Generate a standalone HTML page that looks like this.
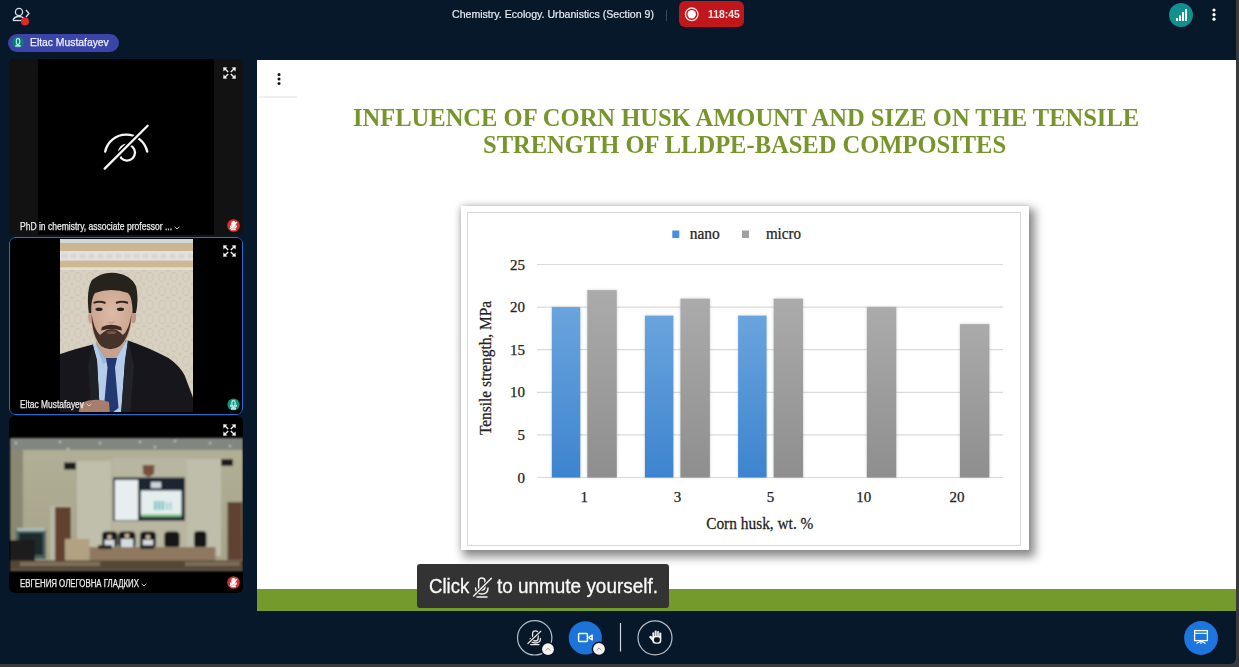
<!DOCTYPE html>
<html><head><meta charset="utf-8">
<style>
*{margin:0;padding:0;box-sizing:border-box}
html,body{width:1239px;height:667px;overflow:hidden;background:#3a3a3a}
body{position:relative;font-family:"Liberation Sans",sans-serif}
.abs{position:absolute}
#app{position:absolute;left:0;top:0;width:1236px;height:664px;background:#06182a;border-radius:0 0 6px 0}
.txt{position:absolute;white-space:nowrap;transform-origin:0 0}
.tile{position:absolute;left:9px;width:234px;background:#000;border-radius:6px;overflow:hidden}
.lbl{position:absolute;left:11px;color:#ededed;-webkit-text-stroke:0.25px #ededed;font-size:9px;white-space:nowrap;transform-origin:0 100%}
.exp{position:absolute;left:214px;top:8px;width:13px;height:13px}
#slide{position:absolute;left:257px;top:60px;width:979px;height:551px;background:#fff;overflow:hidden}
.serif{font-family:"Liberation Serif",serif}
</style></head><body>
<div id="app">
  <!-- top bar -->
  <svg class="abs" style="left:10px;top:5px" width="24" height="22" viewBox="0 0 24 22">
    <circle cx="9" cy="7" r="3.6" fill="none" stroke="#d8dce4" stroke-width="1.3"/>
    <path d="M3 15.5 Q4 11.5 9 11.5 Q12 11.5 13.5 13" fill="none" stroke="#d8dce4" stroke-width="1.3"/>
    <path d="M3 15.5 L12 15.5" fill="none" stroke="#d8dce4" stroke-width="1.3"/>
    <path d="M16 5 L19 8.5 L16 12" fill="none" stroke="#d8dce4" stroke-width="1.3"/>
    <circle cx="15" cy="16.5" r="4" fill="#e3262b"/>
  </svg>
  <div class="txt" id="title" style="left:452px;top:8px;color:#e8ebf0;font-size:11px;transform:scaleX(0.962);-webkit-text-stroke:0.2px #e8ebf0">Chemistry. Ecology. Urbanistics (Section 9)</div>
  <div class="abs" style="left:666px;top:10px;width:1px;height:11px;background:#3d4a5c"></div>
  <div class="abs" style="left:679px;top:1px;width:65px;height:26px;background:#c1161b;border-radius:6px"></div>
  <svg class="abs" style="left:683px;top:6px" width="18" height="17" viewBox="0 0 18 17">
    <circle cx="8.7" cy="8.3" r="6.3" fill="none" stroke="#fbe4e4" stroke-width="1.3"/>
    <circle cx="8.7" cy="8.3" r="4.2" fill="#fff"/>
  </svg>
  <div class="txt" id="timer" style="left:707.5px;top:9.3px;color:#fde8e8;font-size:10px;font-weight:bold;transform:scaleX(1.04)">118:45</div>
  <div class="abs" style="left:1169px;top:2.5px;width:24px;height:24px;border-radius:50%;background:#10918f"></div>
  <svg class="abs" style="left:1175px;top:8px" width="15" height="14" viewBox="0 0 15 14">
    <rect x="1" y="10" width="2" height="3" fill="#fff"/>
    <rect x="4" y="7.5" width="2" height="5.5" fill="#fff"/>
    <rect x="7" y="4" width="2" height="9" fill="#fff"/>
    <rect x="10" y="1" width="2" height="12" fill="#fff"/>
  </svg>
  <svg class="abs" style="left:1210px;top:7px" width="8" height="16" viewBox="0 0 8 16">
    <circle cx="4" cy="3" r="1.6" fill="#fff"/><circle cx="4" cy="7.7" r="1.6" fill="#fff"/><circle cx="4" cy="12.2" r="1.6" fill="#fff"/>
  </svg>
  <!-- name pill -->
  <div class="abs" style="left:8px;top:34px;width:111px;height:18px;background:#3b45a8;border-radius:9px"></div>
  <svg class="abs" style="left:11px;top:36px" width="14" height="14" viewBox="0 0 14 14">
    <circle cx="7" cy="6.3" r="5.8" fill="#0d7c76"/>
    <rect x="5.3" y="2.6" width="3.4" height="5.8" rx="1.7" fill="none" stroke="#bdf5ea" stroke-width="1.1"/>
    <rect x="4.3" y="9.2" width="5.4" height="1.4" fill="#d6fff6"/>
  </svg>
  <div class="txt" id="pillname" style="left:29.5px;top:36px;color:#eef0ff;font-size:11px;transform:scaleX(0.94);-webkit-text-stroke:0.25px #eef0ff">Eltac Mustafayev</div>

  <!-- tiles -->
  <div class="tile" id="t1" style="top:59px;height:176px">
    <div class="abs" style="left:0;top:0;width:29px;height:176px;background:#121212"></div>
    <div class="abs" style="left:205px;top:0;width:29px;height:176px;background:#121212"></div>
    <svg class="abs" style="left:86px;top:56px" width="60" height="60" viewBox="95 115 60 60">
      <path d="M105.2 151.5 A21.5 21.5 0 0 1 147.2 151.5" fill="none" stroke="#f6f6f6" stroke-width="2.4" stroke-linecap="round"/>
      <circle cx="127" cy="152.6" r="8" fill="none" stroke="#f6f6f6" stroke-width="2.3"/>
      <path d="M104.7 168.6 L147.6 125.7" stroke="#000" stroke-width="5.4"/>
      <path d="M104.7 168.6 L147.6 125.7" stroke="#f6f6f6" stroke-width="2.3" stroke-linecap="round"/>
    </svg>
    <svg class="abs" style="left:214px;top:8.4px" width="13" height="12" viewBox="0 0 13 12"><g fill="#f0f0f0"><path d="M0.2 0.2 L4.4 0.5 L0.5 4.4Z"/><path d="M12.8 0.2 L8.6 0.5 L12.5 4.4Z"/><path d="M0.2 11.8 L4.4 11.5 L0.5 7.6Z"/><path d="M12.8 11.8 L8.6 11.5 L12.5 7.6Z"/></g><g stroke="#f0f0f0" stroke-width="1.4"><path d="M1.3 1.3 L5.2 4.9"/><path d="M11.7 1.3 L7.8 4.9"/><path d="M1.3 10.7 L5.2 7.1"/><path d="M11.7 10.7 L7.8 7.1"/></g></svg>
    <div class="lbl" id="lb1" style="top:162px;font-size:10px;transform:scaleX(0.853);transform-origin:0 0">PhD in chemistry, associate professor ...</div>
    <svg class="abs" style="left:164.5px;top:166.5px" width="6" height="4" viewBox="0 0 6 4"><path d="M0.6 0.8 L3 3 L5.4 0.8" fill="none" stroke="#cfcfcf" stroke-width="1"/></svg>
    <svg class="abs" style="left:218px;top:160px" width="13" height="13" viewBox="0 0 13 13"><circle cx="6.5" cy="6.5" r="6.3" fill="#d9302c"/><g fill="none" stroke="#fff" stroke-width="1.3"><rect x="5" y="2.6" width="3" height="5" rx="1.5" fill="#fff"/><path d="M3.6 6.5 Q3.6 9.2 6.5 9.2 Q9.4 9.2 9.4 6.5"/><path d="M4.2 10.6 L8.8 10.6"/><path d="M3 10 L10 3"/></g></svg>
  </div>
  <div class="tile" id="t2" style="top:237px;height:178px">
    <svg class="abs" style="left:51px;top:2px" width="133" height="173" viewBox="60 239 133 173" preserveAspectRatio="none">
      <defs>
        <pattern id="damask" x="60" y="270" width="12" height="14" patternUnits="userSpaceOnUse">
          <rect width="12" height="14" fill="#d8d0c1"/>
          <ellipse cx="6" cy="7" rx="3.2" ry="4.6" fill="none" stroke="#cfc6b5" stroke-width="1.1"/>
          <circle cx="0" cy="0" r="1.8" fill="#d0c7b7"/><circle cx="12" cy="0" r="1.8" fill="#d0c7b7"/><circle cx="0" cy="14" r="1.8" fill="#d0c7b7"/><circle cx="12" cy="14" r="1.8" fill="#d0c7b7"/>
        </pattern>
        <pattern id="mold" x="60" y="251" width="9" height="10" patternUnits="userSpaceOnUse">
          <rect width="9" height="10" fill="#e2e0dc"/>
          <ellipse cx="4.5" cy="5" rx="3" ry="2.5" fill="#d9d8d4"/>
        </pattern>
        <filter id="pb" x="-5%" y="-5%" width="110%" height="110%"><feGaussianBlur stdDeviation="0.55"/></filter>
        <radialGradient id="skin" cx="0.5" cy="0.4" r="0.6"><stop offset="0" stop-color="#dcbaa7"/><stop offset="1" stop-color="#c9a28e"/></radialGradient>
      </defs>
      <g filter="url(#pb)">
      <rect x="55" y="235" width="145" height="185" fill="url(#damask)"/>
      <rect x="55" y="235" width="145" height="8" fill="#d3d7d9"/>
      <rect x="55" y="243" width="145" height="8" fill="#ccb690"/>
      <rect x="55" y="251" width="145" height="9.7" fill="url(#mold)"/>
      <rect x="55" y="260.7" width="145" height="6.7" fill="#ceb893"/>
      <rect x="55" y="267.4" width="145" height="2.6" fill="#e3ddd2"/>
      <!-- suit -->
      <path d="M55 356 L60.4 354 Q78 348 92.8 344.5 L128 340.4 Q150 348 168.5 358 Q180 366 184.7 375.5 L192.8 397 L195 415 L55 415Z" fill="#17181c"/>
      <!-- neck -->
      <path d="M99 338 L124 338 L126 342 L114.5 361 L107.7 362 L95.5 343Z" fill="#c9a28f"/>
      <!-- shirt -->
      <path d="M92.8 344.5 L95.5 343 L107.7 362 L114.5 360.7 L126.6 340.4 L128 340.4 L125 362 L121 415 L100 415 L97 362Z" fill="#b5cdea"/>
      <path d="M95.5 343 L107.7 362 L103 364 Z" fill="#9fb9da"/>
      <path d="M92.8 344.5 L97 360 L100 415 L92 415 L88 365Z" fill="#1f2026"/>
      <path d="M128 340.4 L125 360 L121 415 L130 415 L134 365Z" fill="#222329"/>
      <!-- tie -->
      <path d="M106 358 L117 358 L115 367.4 L118.5 408 L112 413 L103.6 410.7 L107.5 367.4Z" fill="#22396f"/>
      <!-- ears -->
      <ellipse cx="90.8" cy="317" rx="2.6" ry="6.5" fill="#c59e8a"/>
      <ellipse cx="133.3" cy="317" rx="2.8" ry="6.5" fill="#c09985"/>
      <!-- face -->
      <path d="M91.5 292 Q111 286 132 292 L131.5 321 Q130 338 121 346 Q111 352 101 346 Q92 338 91.5 321Z" fill="url(#skin)"/>
      <!-- beard -->
      <path d="M91.5 314 Q92 336 101 346 Q110 352.5 120 346 Q130.5 336 131.5 314 Q129 330 123 335 Q112 323 100 335 Q94 330 91.5 314Z" fill="#443229"/>
      <path d="M102 327 Q111 322.5 121 327 L122 330.5 Q111 327.5 101 330.5Z" fill="#3a2a23"/>
      <ellipse cx="111.5" cy="332.5" rx="4.8" ry="1.6" fill="#7a5247"/>
      <!-- hair -->
      <path d="M88.8 313 Q86 290 92 280 Q103 271 116 273 Q131 275 136 286 Q139 298 136 313 L132.5 313 Q132.5 297 128 293 Q111 287 95 293 Q91 298 91.2 313Z" fill="#27201c"/>
      <!-- brows/eyes -->
      <path d="M93.5 303 Q99 300.5 105.5 303" stroke="#32251f" stroke-width="1.9" fill="none"/>
      <path d="M116 303 Q122 300.5 128 303" stroke="#32251f" stroke-width="1.9" fill="none"/>
      <ellipse cx="99" cy="309.3" rx="3.6" ry="1.8" fill="#2e221e"/>
      <ellipse cx="120.5" cy="309.3" rx="3.6" ry="1.8" fill="#2e221e"/>
      <path d="M108.5 322 Q111 324 114 322" stroke="#b58f7b" stroke-width="1.2" fill="none"/>
      <!-- hand -->
      <path d="M80.7 403 Q95 397 109 402 L110 415 L78 415Z" fill="#a57e6d"/>
      </g>
    </svg>
    <svg class="abs" style="left:214px;top:8.4px" width="13" height="12" viewBox="0 0 13 12"><g fill="#f0f0f0"><path d="M0.2 0.2 L4.4 0.5 L0.5 4.4Z"/><path d="M12.8 0.2 L8.6 0.5 L12.5 4.4Z"/><path d="M0.2 11.8 L4.4 11.5 L0.5 7.6Z"/><path d="M12.8 11.8 L8.6 11.5 L12.5 7.6Z"/></g><g stroke="#f0f0f0" stroke-width="1.4"><path d="M1.3 1.3 L5.2 4.9"/><path d="M11.7 1.3 L7.8 4.9"/><path d="M1.3 10.7 L5.2 7.1"/><path d="M11.7 10.7 L7.8 7.1"/></g></svg>
    <div class="lbl" id="lb2" style="top:162px;font-size:10px;transform:scaleX(0.84);transform-origin:0 0">Eltac Mustafayev</div>
    <svg class="abs" style="left:76.5px;top:165.5px" width="6" height="4" viewBox="0 0 6 4"><path d="M0.6 0.8 L3 3 L5.4 0.8" fill="none" stroke="#cfcfcf" stroke-width="1"/></svg>
    <svg class="abs" style="left:218.4px;top:161px" width="13" height="13" viewBox="0 0 13 13"><circle cx="6.5" cy="6.5" r="6.1" fill="#159180"/><g fill="none" stroke="#bff7ee" stroke-width="1.2"><rect x="4.9" y="2.6" width="3.2" height="5.6" rx="1.6"/><path d="M3.5 6.8 Q3.5 9.3 6.5 9.3 Q9.5 9.3 9.5 6.8"/></g><rect x="4" y="10.2" width="5" height="1.3" fill="#e8fffb"/></svg>
    <div class="abs" style="left:0;top:0;width:234px;height:178px;border:1.5px solid #2c6bcb;border-radius:6px"></div>
  </div>
  <div class="tile" id="t3" style="top:416px;height:177px">
    <svg class="abs" style="left:0;top:0" width="234" height="177" viewBox="9 416 234 177">
      <defs><filter id="rb" x="-2%" y="-2%" width="104%" height="104%"><feGaussianBlur stdDeviation="0.8"/></filter>
        <linearGradient id="wall" x1="0" y1="0" x2="0" y2="1"><stop offset="0" stop-color="#b3b098"/><stop offset="1" stop-color="#a5a289"/></linearGradient></defs>
      <g filter="url(#rb)">
      <rect x="10" y="438" width="233" height="133" fill="url(#wall)"/>
      <rect x="10" y="438" width="233" height="12" fill="#80877f"/>
      <g fill="#d8dcd8"><circle cx="16" cy="443" r="1"/><circle cx="60" cy="442" r="1"/><circle cx="100" cy="443" r="1"/><circle cx="140" cy="442" r="1"/><circle cx="175" cy="441" r="1"/><circle cx="210" cy="443" r="1"/><circle cx="68" cy="449" r="1"/><circle cx="155" cy="447" r="1"/><circle cx="230" cy="446" r="1"/></g>
      <rect x="10" y="450" width="13" height="116" fill="#8a8873"/>
      <rect x="77" y="461" width="34" height="95" fill="#c0bfac"/>
      <rect x="112" y="458" width="75" height="98" fill="#b8b6a1"/>
      <rect x="187" y="459" width="34" height="97" fill="#bfbeab"/>
      <rect x="64" y="462.5" width="12" height="7" fill="#1b1b1b"/>
      <rect x="221" y="459" width="12" height="7" fill="#1b1b1b"/>
      <path d="M142.7 465 L154.4 465 L154 474 L148.5 477 L143 474Z" fill="#77503a"/>
      <rect x="113" y="477.5" width="72" height="43.2" fill="#1c2633"/>
      <rect x="114.8" y="480" width="23.2" height="40" fill="#e8eef0"/>
      <rect x="141" y="490.5" width="40.5" height="26" fill="#e4eeee"/>
      <g fill="#7fc4c4"><rect x="154" y="501" width="2.6" height="9"/><rect x="157.8" y="501" width="2.6" height="9"/><rect x="161.6" y="501" width="2.6" height="9"/><rect x="166" y="502" width="2.2" height="8" fill="#a9d4d0"/><rect x="169.5" y="502" width="2.2" height="8" fill="#a9d4d0"/></g><rect x="151" y="482" width="10" height="6" fill="#c9d4da"/>
      <rect x="141" y="514.5" width="40" height="2" fill="#6fc46a"/>
      <rect x="50" y="505.5" width="22" height="57" fill="#b8b6a6"/>
      <rect x="55" y="507" width="16" height="55" fill="#62432f"/>
      <rect x="227.5" y="502" width="15" height="58" fill="#5f4331"/>
      <rect x="16" y="529" width="30" height="30" fill="#4a6060"/><rect x="17" y="528" width="28" height="3" fill="#a9bdb8"/>
      <rect x="19" y="533" width="24" height="22" fill="#1d2a2c"/>
      <rect x="10" y="540" width="25" height="26" fill="#1f1f1f"/>
      <g fill="#161616"><rect x="102" y="531.5" width="15.5" height="16.5" rx="4"/><rect x="118.4" y="531.5" width="17" height="16.5" rx="4"/><rect x="140" y="531.5" width="16" height="16.5" rx="4"/><rect x="164.3" y="531.5" width="15.3" height="16.5" rx="4"/><rect x="194" y="531" width="12.5" height="17" rx="4"/></g>
      <g fill="#d6dde2"><rect x="104.5" y="540" width="10" height="7"/><rect x="121" y="539" width="12" height="8"/><rect x="143" y="540" width="10" height="7"/></g>
      <g fill="#cdb59e"><circle cx="109.5" cy="537" r="2.3"/><circle cx="127" cy="535.8" r="2.4"/><circle cx="148" cy="537" r="2.3"/></g>
      <rect x="65" y="539" width="24.5" height="24" fill="#b2a183"/>
      <rect x="89.5" y="547" width="126" height="14" fill="#8e7860"/>
      <rect x="98" y="545" width="14" height="4" fill="#222"/><rect x="140" y="545" width="14" height="4" fill="#222"/>
      <rect x="10" y="560.5" width="233" height="10" fill="#554636"/>
      <rect x="20" y="562" width="80" height="4" fill="#80705c"/><rect x="185" y="562" width="55" height="4" fill="#7d6d5a"/>
      </g>
    </svg>
    <svg class="abs" style="left:214px;top:8.4px" width="13" height="12" viewBox="0 0 13 12"><g fill="#f0f0f0"><path d="M0.2 0.2 L4.4 0.5 L0.5 4.4Z"/><path d="M12.8 0.2 L8.6 0.5 L12.5 4.4Z"/><path d="M0.2 11.8 L4.4 11.5 L0.5 7.6Z"/><path d="M12.8 11.8 L8.6 11.5 L12.5 7.6Z"/></g><g stroke="#f0f0f0" stroke-width="1.4"><path d="M1.3 1.3 L5.2 4.9"/><path d="M11.7 1.3 L7.8 4.9"/><path d="M1.3 10.7 L5.2 7.1"/><path d="M11.7 10.7 L7.8 7.1"/></g></svg>
    <div class="lbl" id="lb3" style="top:161.5px;font-size:10px;transform:scaleX(0.785);transform-origin:0 0">ЕВГЕНИЯ ОЛЕГОВНА ГЛАДКИХ</div>
    <svg class="abs" style="left:131.5px;top:167px" width="6" height="4" viewBox="0 0 6 4"><path d="M0.6 0.8 L3 3 L5.4 0.8" fill="none" stroke="#cfcfcf" stroke-width="1"/></svg>
    <svg class="abs" style="left:218px;top:160.1px" width="13" height="13" viewBox="0 0 13 13"><circle cx="6.5" cy="6.5" r="6.3" fill="#d9302c"/><g fill="none" stroke="#fff" stroke-width="1.3"><rect x="5" y="2.6" width="3" height="5" rx="1.5" fill="#fff"/><path d="M3.6 6.5 Q3.6 9.2 6.5 9.2 Q9.4 9.2 9.4 6.5"/><path d="M4.2 10.6 L8.8 10.6"/><path d="M3 10 L10 3"/></g></svg>
  </div>
</div>

<div id="slide">
  <svg class="abs" style="left:18px;top:11.5px" width="8" height="14" viewBox="0 0 8 14">
    <circle cx="4" cy="2.5" r="1.5" fill="#141414"/><circle cx="4" cy="7" r="1.5" fill="#141414"/><circle cx="4" cy="11.4" r="1.5" fill="#141414"/>
  </svg>
  <div class="abs" style="left:2px;top:36px;width:38px;height:1.5px;background:#f0f0f0"></div>
  <div class="txt serif" id="tl1" style="left:96px;top:44px;color:#76962c;font-size:25px;font-weight:bold;transform:scaleX(0.981)">INFLUENCE OF CORN HUSK AMOUNT AND SIZE ON THE TENSILE</div>
  <div class="txt serif" id="tl2" style="left:226px;top:71px;color:#76962c;font-size:25px;font-weight:bold;transform:scaleX(0.981)">STRENGTH OF LLDPE-BASED COMPOSITES</div>
  <!-- chart -->
  <div class="abs" id="chartbox" style="left:204px;top:146px;width:568px;height:344px;background:#fff;box-shadow:4px 5px 9px 2px rgba(0,0,0,0.45), -1px -1px 6px rgba(0,0,0,0.12)"></div>
  <div class="abs" style="left:210px;top:152px;width:554px;height:334px;border:1.5px solid #d8d8d8"></div>
  <svg class="abs" style="left:204px;top:146px" width="568" height="344" viewBox="0 0 568 344">
    <defs>
      <linearGradient id="gb" x1="0" y1="0" x2="0" y2="1"><stop offset="0" stop-color="#6aa4dd"/><stop offset="1" stop-color="#3d84cf"/></linearGradient>
      <linearGradient id="gg" x1="0" y1="0" x2="0" y2="1"><stop offset="0" stop-color="#ababab"/><stop offset="1" stop-color="#8e8e8e"/></linearGradient>
      <filter id="sh" x="-30%" y="-10%" width="160%" height="120%"><feDropShadow dx="0" dy="0" stdDeviation="1.5" flood-color="#000" flood-opacity="0.18"/></filter>
    </defs>
    <g stroke="#dadada" stroke-width="1.2">
      <line x1="76" y1="58.5" x2="542" y2="58.5"/>
      <line x1="76" y1="101.1" x2="542" y2="101.1"/>
      <line x1="76" y1="143.7" x2="542" y2="143.7"/>
      <line x1="76" y1="186.3" x2="542" y2="186.3"/>
      <line x1="76" y1="228.9" x2="542" y2="228.9"/>
      <line x1="76" y1="271.5" x2="542" y2="271.5"/>
    </g>
    <g filter="url(#sh)">
    <rect x="90.8" y="101.1" width="28.5" height="170.4" fill="url(#gb)"/>
    <rect x="126.3" y="84.1" width="29.5" height="187.4" fill="url(#gg)"/>
    <rect x="183.9" y="109.6" width="28.5" height="161.9" fill="url(#gb)"/>
    <rect x="219.4" y="92.6" width="29.5" height="178.9" fill="url(#gg)"/>
    <rect x="277.1" y="109.6" width="28.5" height="161.9" fill="url(#gb)"/>
    <rect x="312.6" y="92.6" width="29.5" height="178.9" fill="url(#gg)"/>
    <rect x="405.8" y="101.1" width="29.5" height="170.4" fill="url(#gg)"/>
    <rect x="498.9" y="118.1" width="29.5" height="153.4" fill="url(#gg)"/>
    </g>
    <g font-family="Liberation Serif" font-size="15" fill="#222" stroke="#222" stroke-width="0.25" text-anchor="end">
      <text x="64" y="63.6">25</text>
      <text x="64" y="106.2">20</text>
      <text x="64" y="148.8">15</text>
      <text x="64" y="191.4">10</text>
      <text x="64" y="234">5</text>
      <text x="64" y="276.6">0</text>
    </g>
    <g font-family="Liberation Serif" font-size="15" fill="#222" stroke="#222" stroke-width="0.25" text-anchor="middle">
      <text x="123.3" y="295.6">1</text>
      <text x="216.4" y="295.6">3</text>
      <text x="309.6" y="295.6">5</text>
      <text x="402.8" y="295.6">10</text>
      <text x="495.9" y="295.6">20</text>
    </g>
    <rect x="211.3" y="24.5" width="7" height="7.5" fill="#4a8fd6"/>
    <rect x="281" y="24.5" width="7" height="7.5" fill="#a0a0a0"/>
    <g font-family="Liberation Serif" font-size="16" fill="#222" stroke="#222" stroke-width="0.25">
      <text id="lg1" x="228.7" y="33.2" transform="translate(228.7 0) scale(0.965 1) translate(-228.7 0)">nano</text>
      <text id="lg2" x="304.9" y="33.2" transform="translate(304.9 0) scale(0.94 1) translate(-304.9 0)">micro</text>
      <text id="xt" x="298.8" y="323.3" text-anchor="middle" transform="translate(298.8 0) scale(0.962 1) translate(-298.8 0)">Corn husk, wt. %</text>
      <text id="yt" transform="translate(29.5,162) rotate(-90) scale(0.96 1)" text-anchor="middle">Tensile strength, MPa</text>
    </g>
  </svg>
  <div class="abs" style="left:0;top:529px;width:979px;height:22px;background:#739a2a"></div>
</div>

<!-- toolbar -->
<svg class="abs" style="left:500px;top:612px" width="200" height="52" viewBox="500 612 200 52">
  <circle cx="534.7" cy="637.8" r="17.2" fill="none" stroke="#b9bfc9" stroke-width="1.2"/>
  <g fill="none" stroke="#e6e6e6" stroke-width="1.3" stroke-linecap="round">
    <rect x="532.6" y="630.8" width="5.6" height="10.2" rx="2.8"/>
    <path d="M530.3 638.5 Q530.3 643 535.4 643 Q540.5 643 540.5 638.5"/>
    <path d="M530.6 644.6 L539 644.6"/>
  </g>
  <path d="M527.9 643.5 L540.8 631.2" stroke="#071628" stroke-width="3"/>
  <path d="M527.9 643.5 L540.8 631.2" stroke="#e6e6e6" stroke-width="1.2" stroke-linecap="round"/>
  <circle cx="548" cy="649.2" r="7.3" fill="#071628"/>
  <circle cx="548" cy="649.2" r="5.9" fill="#f5f3ef"/>
  <path d="M545.6 650.6 L548 648.2 L550.4 650.6" fill="none" stroke="#8a8a8a" stroke-width="0.9"/>

  <circle cx="585.3" cy="637.8" r="16.6" fill="#1c74d9"/>
  <rect x="578.6" y="633.5" width="8.8" height="7.9" rx="0.8" fill="none" stroke="#fff" stroke-width="1.5"/>
  <path d="M588.6 637.45 L592.2 635 L592.2 639.9 Z" fill="none" stroke="#fff" stroke-width="1.3" stroke-linejoin="round"/>
  <circle cx="599" cy="648.9" r="7.3" fill="#071628"/>
  <circle cx="599" cy="648.9" r="5.9" fill="#f5f3ef"/>
  <path d="M596.6 650.3 L599 647.9 L601.4 650.3" fill="none" stroke="#8a8a8a" stroke-width="0.9"/>

  <line x1="620.5" y1="623" x2="620.5" y2="651.5" stroke="#d0d4da" stroke-width="1.2"/>

  <circle cx="655" cy="637.8" r="17" fill="none" stroke="#b9bfc9" stroke-width="1.2"/>
  <g fill="#f4f4f4">
    <rect x="652.4" y="632.2" width="2.3" height="7" rx="1.15"/>
    <rect x="654.6" y="630.4" width="2.3" height="8" rx="1.15"/>
    <rect x="656.8" y="630.9" width="2.3" height="8" rx="1.15"/>
    <rect x="659" y="632.4" width="2.3" height="7" rx="1.15"/>
    <rect x="652.4" y="635.5" width="8.9" height="8.3" rx="3.2"/>
    <path d="M653.6 642.2 L649.3 637.6 Q648.8 636.4 650 635.9 Q651 635.6 651.8 636.6 L653.8 638.6Z"/>
  </g>
  <g stroke="#0a1626" stroke-width="0.45"><line x1="654.65" y1="631.5" x2="654.65" y2="636"/><line x1="656.85" y1="631" x2="656.85" y2="636"/><line x1="659.05" y1="632" x2="659.05" y2="636"/></g>
  <rect x="654" y="637.2" width="5.8" height="5.2" rx="1.8" fill="#0a1626"/>
</svg>
<svg class="abs" style="left:1180px;top:617px" width="42" height="42" viewBox="1180 617 42 42">
  <circle cx="1201" cy="638" r="16.9" fill="#1c76de"/>
  <rect x="1194.6" y="630.6" width="12.8" height="10" fill="none" stroke="#fff" stroke-width="1.3"/>
  <line x1="1194.6" y1="633.3" x2="1207.4" y2="633.3" stroke="#fff" stroke-width="1.1"/>
  <path d="M1201 641 L1201 643.9 M1201 641 L1196.4 643.5 M1201 641 L1205.6 643.5" stroke="#fff" stroke-width="1.1" fill="none"/>
</svg>
<!-- tooltip -->
<div class="abs" style="left:417px;top:564px;width:252px;height:44px;background:#333333;border-radius:3px"></div>
<div class="txt" id="tt1" style="left:428.5px;top:574.8px;color:#fafafa;font-size:20px;transform:scaleX(0.93);-webkit-text-stroke:0.3px #fafafa">Click</div>
<svg class="abs" style="left:470px;top:574px" width="26" height="26" viewBox="470 574 26 26">
  <g fill="none" stroke="#f2f2f2" stroke-width="1.5" stroke-linecap="round">
    <rect x="478.6" y="578" width="6.4" height="12" rx="3.2"/>
    <path d="M475.6 588 Q475.6 594 481.8 594 Q488 594 488 588"/>
    <path d="M477 597 L487 597"/>
  </g>
  <path d="M473.6 596 L491.4 578.2" stroke="#333" stroke-width="3.2"/>
  <path d="M473.6 596 L491.4 578.2" stroke="#f2f2f2" stroke-width="1.5" stroke-linecap="round"/>
</svg>
<div class="txt" id="tt2" style="left:497px;top:574.8px;color:#fafafa;font-size:20px;transform:scaleX(0.946);-webkit-text-stroke:0.3px #fafafa">to unmute yourself.</div>
</body></html>
